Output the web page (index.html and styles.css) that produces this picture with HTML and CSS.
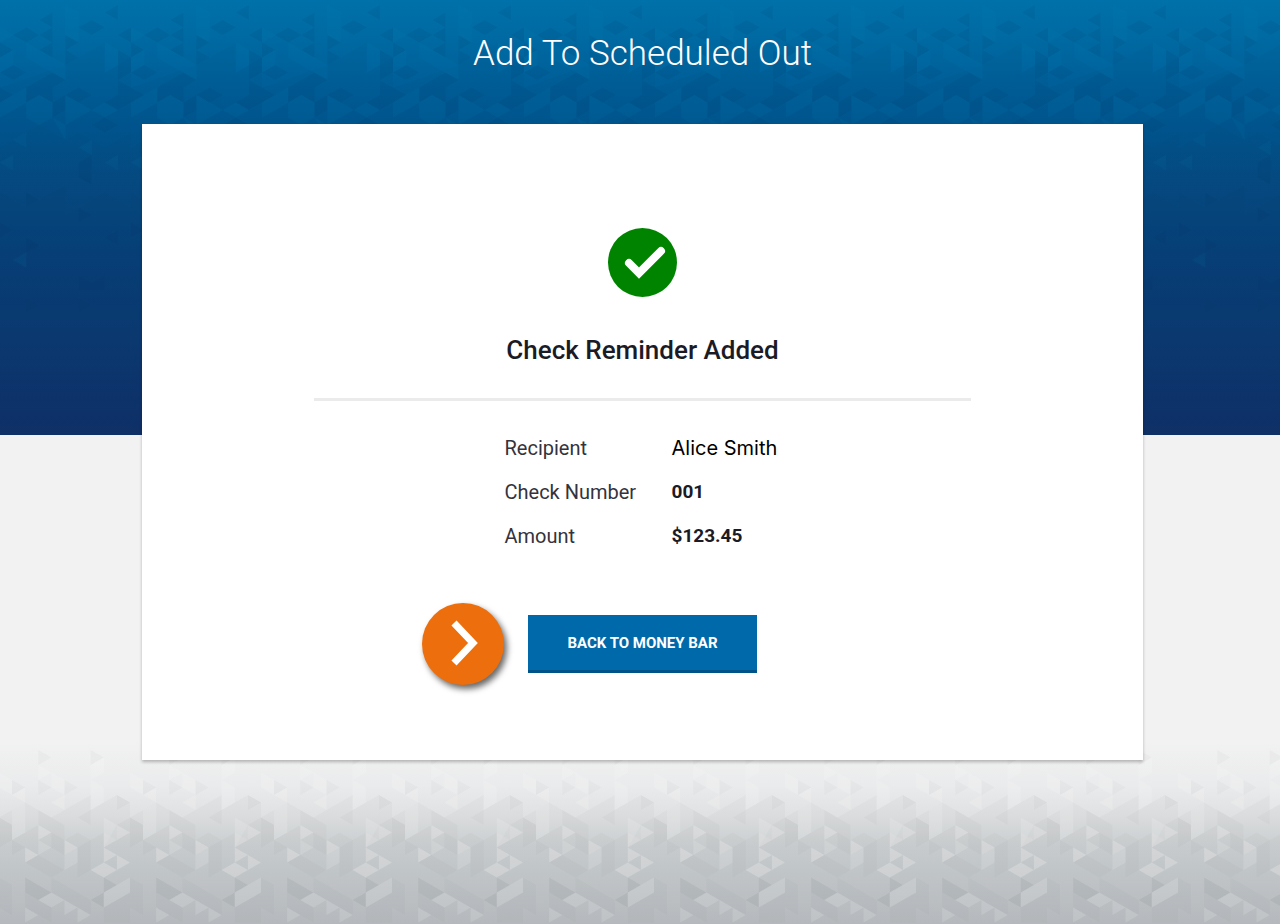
FILE: index.html
```html
<!DOCTYPE html>
<html lang="en">
  <head>
    <meta charset="utf-8">
    <meta name="viewport" content="width=device-width, initial-scale=1">
    <title>Add To Scheduled Out</title>
    <link rel="stylesheet" href="styles.css">
  </head>

  <body>
    <div class="page">

      <!-- blue band, triangle tile repeats every 131px -->
      <svg class="backdrop backdrop-top" aria-hidden="true">
        <defs>
          <pattern id="blueTile" width="10" height="60" patternUnits="userSpaceOnUse" patternTransform="translate(0 5) scale(13.1 7.5)">
            <path class="dark-1" d="M0 11L5 8L6 7L8 5V9L10 7V58H0Z"/>
            <path class="dark-1" d="M0 19L2 17L3 16L5 18L6 17L8 19L10 17V58H0Z"/>
            <path class="dark-1" d="M0 25L2 27L5 24V28L8 25L10 27V58H0Z"/>
            <path class="dark-2" d="M3 2L4 1V3ZM8 1L9 0V2ZM6 3L7 2L8 3L7 4ZM1 4L2 3L3 4L2 5ZM3 4L4 3V5ZM3 6L4 5V7ZM9 4L10 3V5ZM5 4L6 5L5 6ZM0 5L1 6L0 7ZM5 6L6 7L5 8Z"/>
            <path class="dark-2" d="M0 9L1 8L2 9L1 10ZM2 11L4 9L5 10L4 11V13L3 12L2 13ZM5 12L6 11L7 12L6 13ZM8 13L9 12V10L10 11V13L9 14ZM0 11L1 12L0 13Z"/>
            <path class="dark-2" d="M4 13L5 12V14L4 15ZM9 6L10 7V9L9 10ZM7 16L8 15L9 16L8 17ZM6 21L7 20V24L6 23ZM2 25L3 26L2 27ZM6 27L7 28L6 29ZM2 31L3 32L2 33ZM0 29L1 30L0 31ZM8 31L9 30V32ZM2 39L3 40L2 41ZM6 39L7 40L6 41ZM6 36L7 37L8 36V38H6Z"/>
            <path class="light-1" d="M2 5L5 8V10L2 7ZM8 5L9 6V8L8 9ZM0 7L1 6V8L0 9ZM0 3L1 4L0 5ZM5 0L6 1V5L5 4Z"/>
            <path class="light-1" d="M2 13L3 12L4 13V15L3 16L2 15ZM5 12L7 14L5 16ZM4 15L5 16V18ZM0 13L2 11V13L0 15ZM7 14L8 13L9 14L8 15Z"/>
            <path class="light-1" d="M6 19L7 18V20ZM8 21L9 20V22ZM0 21L1 20V22ZM1 18L2 17V19ZM1 34L2 33V35Z"/>
          </pattern>
        </defs>
        <rect width="100%" height="100%" fill="url(#blueTile)"/>
      </svg>

      <!-- grey footer, same grid -->
      <svg class="backdrop backdrop-bottom" aria-hidden="true">
        <defs>
          <pattern id="greyTile" width="10" height="40" patternUnits="userSpaceOnUse" patternTransform="translate(-1 0) scale(13.1 7.5)">
            <path class="shade-1" d="M0 13L2 11L4 13L5 12L7 10V12L9 10L10 11V40H0Z"/>
            <path class="shade-1" d="M0 13L1 14V16L4 13L5 14V16L6 15L7 16L8 15V17L9 14L10 13V40H0Z"/>
            <path class="shade-1" d="M3 4L4 5L3 6ZM7 4L8 5L7 6ZM1 8L2 9L1 10ZM3 8L4 9L3 10ZM5 8L6 9L5 10ZM9 10L10 11L9 12ZM3 12L4 13L3 14ZM1 16L2 17L1 18ZM0 13L1 14V16L0 17ZM6 13L7 12V14ZM4 15L5 16V18L4 17ZM6 17L7 16V20L6 21ZM3 18L5 20L4 21L2 19Z"/>
            <path class="shade-2" d="M2 21L4 23L3 24L2 23ZM8 21L9 22L8 23ZM7 24L8 23V25Z"/>
            <path class="shade-1" d="M4 21L5 22L4 23ZM4 23L5 22L7 24V26L5 24ZM2 23L3 24L4 25V27L2 25ZM0 21L1 22V26L0 25ZM8 25L10 23V27L8 27Z"/>
            <path class="light-2" d="M7 6L8 5V7L7 8ZM3 6L4 7L3 8ZM4 7L5 8V10L4 9ZM0 7L1 8V10L0 9ZM7 8L8 9V11L7 12ZM1 12L2 11V15L1 16ZM8 13L9 14V16L8 15ZM5 18L6 17V19L5 20ZM3 16L4 17L3 18Z"/>
            <path class="light-3" d="M1 10L2 9V11ZM4 11L5 10V12ZM3 14L4 15L3 16ZM9 14L10 15L9 16ZM8 15L9 16L8 17ZM5 16L6 17L5 18ZM2 17L3 18L2 19ZM8 17L9 18L8 19ZM9 18L10 19L9 20ZM7 20L8 19L9 20L8 21Z"/>
            <path class="light-2" d="M3 24L4 23L5 24L4 25ZM2 25L3 26L2 27ZM6 25L7 26L6 27ZM5 24L6 25L5 26ZM8 23L10 21V23L8 25Z"/>
          </pattern>
        </defs>
        <rect width="100%" height="100%" fill="url(#greyTile)"/>
      </svg>

      <main class="content">
        <h1>Add To Scheduled Out</h1>

        <section class="card">
          <svg class="success-icon" viewBox="0 0 69 69" role="img" aria-label="Success">
            <circle cx="34.5" cy="34.5" r="34.5" fill="#008400"/>
            <path d="M21 35L31 45L53 23" fill="none" stroke="#fff" stroke-width="8" stroke-linecap="round" stroke-linejoin="miter"/>
          </svg>

          <h2>Check Reminder Added</h2>

          <hr class="divider">

          <table class="details">
            <tr>
              <th scope="row">Recipient</th>
              <td class="recipient">Alice Smith</td>
            </tr>
            <tr>
              <th scope="row">Check Number</th>
              <td>001</td>
            </tr>
            <tr>
              <th scope="row">Amount</th>
              <td>$123.45</td>
            </tr>
          </table>

          <div class="actions">
            <button type="button" class="next-btn" aria-label="Next">
              <svg viewBox="0 0 82 82" aria-hidden="true">
                <path d="M32 20L51 40L32 60" fill="none" stroke="#fff" stroke-width="7"/>
              </svg>
            </button>
            <button type="button" class="back-btn">BACK TO MONEY BAR</button>
          </div>
        </section>
      </main>

    </div>
  </body>
</html>
```

FILE: styles.css
```css
* {
  box-sizing: border-box;
}

body {
  margin: 0;
  font-family: Roboto, "Liberation Sans", sans-serif;
  color: #1b1b26;
  background-color: #f2f2f2;
}

.page {
  position: relative;
  min-height: 100vh;
}

/* Patterned bands behind the card */
.backdrop {
  position: absolute;
  left: 0;
  width: 100%;
}

.backdrop-top {
  top: 0;
  height: 435px;
  background: linear-gradient(#0071aa, #0069a1 40px, #005e98 85px, #00558e 130px, #054c84 180px, #07427b 250px, #0b3b74 330px, #10316b);
}

.backdrop-bottom {
  bottom: 0;
  height: 204px;
  background: linear-gradient(#f2f2f2 20px, #eaebec 65px, #dfe1e2 95px, #d0d4d6 125px, #c8cdd0 155px, #bdc1c5);
}

.dark-1 { fill: #001c38; fill-opacity: 0.03; }
.dark-2 { fill: #001c48; fill-opacity: 0.07; }
.light-1 { fill: #0087c0; fill-opacity: 0.08; }
.shade-1 { fill: #40474c; fill-opacity: 0.03; }
.shade-2 { fill: #40474c; fill-opacity: 0.08; }
.light-2 { fill: #fff; fill-opacity: 0.12; }
.light-3 { fill: #f8f4f4; fill-opacity: 0.26; }

.content {
  position: relative;
  padding: 32px 137px 50px 142px;
}

h1 {
  margin: 0 0 48px;
  font-size: 35px;
  font-weight: 300;
  line-height: 44px;
  text-align: center;
  color: #fff;
}

.card {
  display: flex;
  flex-direction: column;
  align-items: center;
  padding: 104px 24px 75px;
  background-color: #fff;
  box-shadow: 0 2px 3px rgba(0, 0, 0, 0.25);
}

.success-icon {
  width: 69px;
  height: 69px;
}

h2 {
  margin: 37px 0 32px;
  font-size: 26px;
  font-weight: 500;
  line-height: 32px;
}

.divider {
  width: 100%;
  max-width: 657px;
  height: 3px;
  margin: 0 0 25px;
  border: none;
  background-color: #ebebec;
}

/* Check details */
.details {
  width: 276px;
  border-collapse: collapse;
  font-size: 20px;
  line-height: 24px;
}

.details th,
.details td {
  height: 44px;
  padding: 0;
  text-align: left;
  white-space: nowrap;
}

.details th {
  width: 167px;
  font-weight: 400;
  color: #33333d;
}

.details td {
  font-size: 19px;
  font-weight: 700;
}

.details .recipient {
  font-family: Inter, "Liberation Sans", sans-serif;
  font-size: 20px;
  font-weight: 400;
  color: #000;
}

/* Buttons */
.actions {
  display: grid;
  grid-template-columns: 1fr auto 1fr;
  column-gap: 24px;
  align-items: center;
  width: 100%;
  margin-top: 45px;
}

.next-btn {
  justify-self: end;
  width: 82px;
  height: 82px;
  padding: 0;
  border: none;
  border-radius: 50%;
  background-color: #ec6e0d;
  box-shadow: 3px 4px 6px rgba(0, 0, 0, 0.6);
  cursor: pointer;
}

.next-btn svg {
  display: block;
}

.back-btn {
  width: 229px;
  height: 58px;
  padding: 0;
  border: none;
  border-bottom: 3px solid #005388;
  background-color: #0069aa;
  color: #fff;
  font-family: inherit;
  font-size: 15px;
  font-weight: 700;
  cursor: pointer;
}
```
